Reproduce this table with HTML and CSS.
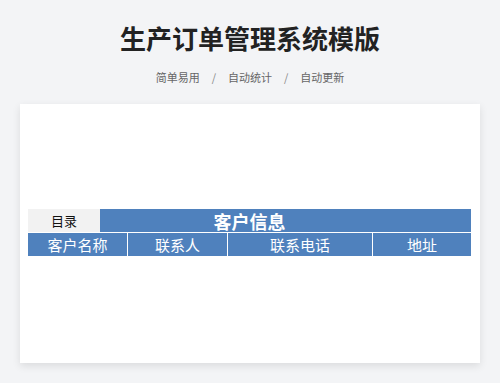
FILE: index.html
```html
<!DOCTYPE html>
<html lang="zh-CN">
<head>
<meta charset="utf-8">
<title>生产订单管理系统模版</title>
<link rel="stylesheet" href="styles.css">
</head>
<body>
  <header class="hero">
    <h1 class="title">生产订单管理系统模版</h1>
    <p class="tags">
      <span>简单易用</span><span class="sep">/</span><span>自动统计</span><span class="sep">/</span><span>自动更新</span>
    </p>
  </header>
  <main class="sheet">
    <div class="grid">
      <div class="cell toc">目录</div>
      <div class="cell caption">客户信息</div>
      <div class="cell head">客户名称</div>
      <div class="cell head">联系人</div>
      <div class="cell head">联系电话</div>
      <div class="cell head">地址</div>
    </div>
  </main>
</body>
</html>
```

FILE: styles.css
```css
html, body {
  margin: 0;
  padding: 0;
}

body {
  width: 500px;
  height: 383px;
  background: #f3f4f6;
  font-family: "Noto Sans CJK SC", "Noto Sans", sans-serif;
  overflow: hidden;
}

.hero {
  text-align: center;
  padding-top: 20px;
}

.title {
  margin: 0;
  font-size: 26px;
  line-height: 36px;
  font-weight: 700;
  color: #222;
}

.tags {
  margin: 13px 0 0;
  font-size: 11px;
  line-height: 16px;
  color: #666;
}

.tags .sep {
  margin: 0 12px;
  color: #888;
}

.sheet {
  margin: 19px 20px 0;
  height: 259px;
  background: #fff;
  box-shadow: 0 3px 8px rgba(0, 0, 0, 0.10);
  padding: 105px 9px 0 8px;
  box-sizing: border-box;
}

.grid {
  display: grid;
  grid-template-columns: 72px 27px 100px 145px 99px;
  grid-template-rows: 23px 23px;
  row-gap: 1px;
  background: #fff;
  width: 443px;
}

.cell {
  display: flex;
  align-items: center;
  justify-content: center;
  color: #fff;
  background: #4f81bd;
  font-size: 15px;
  line-height: 1;
}

.toc {
  background: #f2f2f2;
  color: #111;
  font-size: 13px;
}

.caption {
  grid-column: 2 / 6;
  font-size: 18px;
  font-weight: 700;
  padding-right: 72px;
}

.head {
  border-left: 1px solid #fff;
}

.head:nth-child(3) {
  grid-column: 1 / 3;
  border-left: none;
}
```
